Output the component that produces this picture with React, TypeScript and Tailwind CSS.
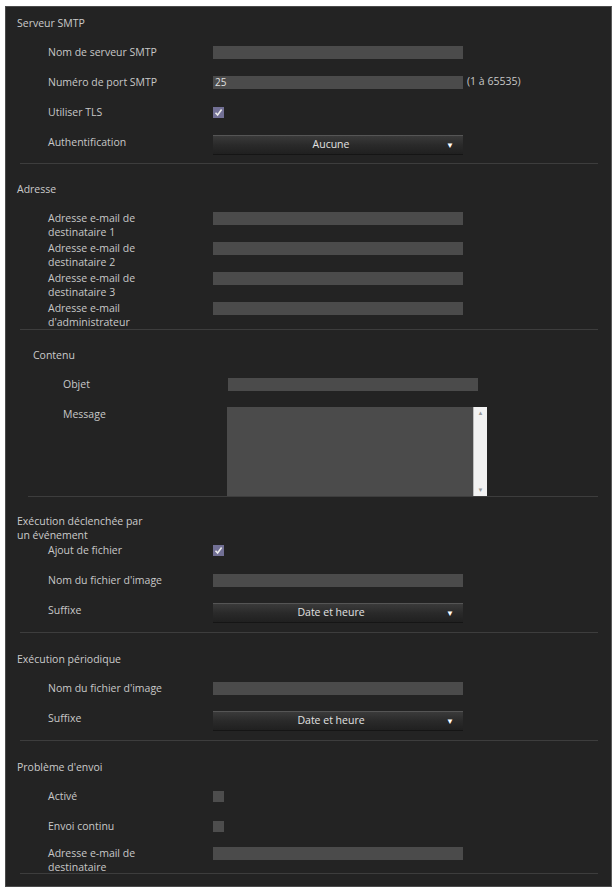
import { ReactNode } from "react";

// Paramètres e-mail (SMTP) — panneau sombre d'une page de configuration caméra.

const font = { fontFamily: '"Open Sans", "Liberation Sans", sans-serif' };

function TextBox({ value, w = "w-[250px]" }: { value?: string; w?: string }) {
  return (
    <div className={`${w} h-[13px] bg-[#4b4b4b] text-[10px] leading-[13px] text-[#e0e0e0] pl-[2px]`}>
      {value}
    </div>
  );
}

function Select({ value }: { value: string }) {
  return (
    <div className="relative mt-[4px] w-[250px] h-[19px] bg-gradient-to-b from-[#3a3a3a] via-[#2a2a2a] to-[#202020] border-t border-[#555] shadow-[0_1px_0_#151515] flex items-center justify-center text-[#e2e2e2]">
      <span className="-ml-[14px]">{value}</span>
      <span className="absolute right-[9px] top-[3px] text-[8px] text-white">▼</span>
    </div>
  );
}

function Check({ on }: { on?: boolean }) {
  return (
    <div className={`w-[11px] h-[11px] ${on ? "bg-[#727095]" : "bg-[#4d4d4d]"} flex items-center justify-center`}>
      {on && (
        <svg width="9" height="9" viewBox="0 0 9 9">
          <path d="M1.5 4.8 L3.6 7 L7.6 1.6" stroke="#ececec" strokeWidth="1.6" fill="none" />
        </svg>
      )}
    </div>
  );
}

function Row({ label, children, top, inset }: { label: ReactNode; children: ReactNode; top?: boolean; inset?: boolean }) {
  const pad = inset ? "pl-[57px]" : "pl-[42px]";
  if (top) {
    return (
      <div className={`flex h-[30px] ${pad}`}>
        <div className="w-[165px] pt-[8px] leading-[14px]">{label}</div>
        <div className="pt-[9px]">{children}</div>
      </div>
    );
  }
  return (
    <div className={`flex h-[30px] items-center ${pad}`}>
      <div className="w-[165px] leading-[14px]">{label}</div>
      {children}
    </div>
  );
}

function Sep({ inset }: { inset?: boolean }) {
  return <div className={`h-px bg-[#3d3d3d] ${inset ? "ml-[22px] w-[570px]" : "ml-[14px] w-[578px]"}`} />;
}

function Title({ children, pt, inset }: { children: ReactNode; pt: string; inset?: boolean }) {
  return <div className={`${pt} ${inset ? "pl-[27px]" : "pl-[11px]"} leading-[14px] text-[#cbcbcb]`}>{children}</div>;
}

export default function App() {
  return (
    <div className="min-h-[890px] bg-white pt-[6px] pl-[5px]" style={font}>
      <div className="w-[607px] h-[881px] bg-[#232323] border border-[#4a4a4a] border-r-[#5a5a5a] text-[10.5px] text-[#c8c8c8]">
        {/* Serveur SMTP */}
        <Title pt="pt-[9px]">Serveur SMTP</Title>
        <div className="mt-[7px] pb-[6px]">
          <Row label="Nom de serveur SMTP"><TextBox /></Row>
          <Row label="Numéro de port SMTP">
            <div className="flex items-center gap-[4px]">
              <TextBox value="25" />
              <span>(1 à 65535)</span>
            </div>
          </Row>
          <Row label="Utiliser TLS"><Check on /></Row>
          <Row label="Authentification"><Select value="Aucune" /></Row>
        </div>
        <Sep />

        {/* Adresse */}
        <Title pt="pt-[18px]">Adresse</Title>
        <div className="mt-[7px] pb-[6px]">
          <Row top label={<>Adresse e-mail de<br />destinataire 1</>}><TextBox /></Row>
          <Row top label={<>Adresse e-mail de<br />destinataire 2</>}><TextBox /></Row>
          <Row top label={<>Adresse e-mail de<br />destinataire 3</>}><TextBox /></Row>
          <Row top label={<>Adresse e-mail<br />d'administrateur</>}><TextBox /></Row>
        </div>
        <Sep />

        {/* Contenu */}
        <Title pt="pt-[18px]" inset>Contenu</Title>
        <div className="mt-[7px]">
          <Row inset label="Objet"><TextBox /></Row>
          <div className="flex pl-[57px] h-[97px]">
            <div className="w-[164px] pt-[8px] leading-[14px]">Message</div>
            <div className="mt-[8px] flex h-[89px]">
              <div className="w-[246px] bg-[#4b4b4b]" />
              <div className="w-[14px] bg-[#f2f2f2] border-l border-[#bdbdbd] flex flex-col items-center justify-between py-[3px] text-[6px] leading-[6px] text-[#9a9a9a]">
                <span>▲</span>
                <span>▼</span>
              </div>
            </div>
          </div>
        </div>
        <Sep inset />

        {/* Exécution déclenchée par un événement */}
        <Title pt="pt-[17px]">Exécution déclenchée par<br />un événement</Title>
        <div className="-mt-[7px] pb-[7px]">
          <Row label="Ajout de fichier"><Check on /></Row>
          <Row label="Nom du fichier d'image"><TextBox /></Row>
          <Row label="Suffixe"><Select value="Date et heure" /></Row>
        </div>
        <Sep />

        {/* Exécution périodique */}
        <Title pt="pt-[19px]">Exécution périodique</Title>
        <div className="mt-[7px] pb-[7px]">
          <Row label="Nom du fichier d'image"><TextBox /></Row>
          <Row label="Suffixe"><Select value="Date et heure" /></Row>
        </div>
        <Sep />

        {/* Problème d'envoi */}
        <Title pt="pt-[19px]">Problème d'envoi</Title>
        <div className="mt-[7px] pb-[5px]">
          <Row label="Activé"><Check /></Row>
          <Row label="Envoi continu"><Check /></Row>
          <div className="-mt-[3px]">
            <Row top label={<>Adresse e-mail de<br />destinataire</>}><TextBox /></Row>
          </div>
        </div>
        <Sep />
      </div>
    </div>
  );
}
